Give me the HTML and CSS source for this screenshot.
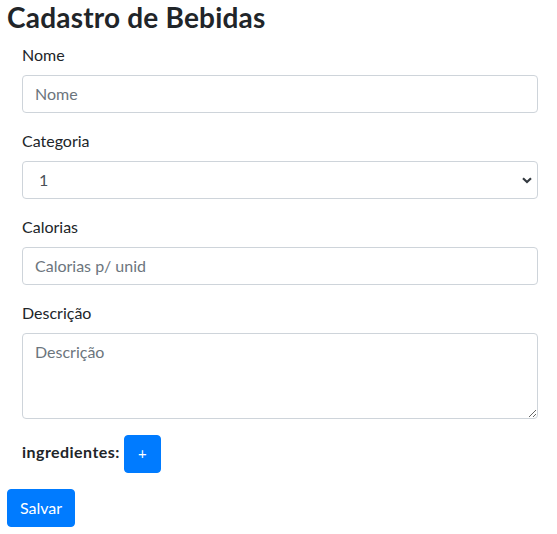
FILE: index.html
```html
<!DOCTYPE html>
<html lang="pt-BR">
<head>
<meta charset="utf-8">
<title>Cadastro de Bebidas</title>
<link rel="stylesheet" href="styles.css">
</head>
<body>
  <h3 class="title">Cadastro de Bebidas</h3>
  <form class="form">
    <div class="fields">
      <div class="form-group">
        <label class="label" for="nome">Nome</label>
        <input class="form-control" id="nome" type="text" placeholder="Nome">
      </div>
      <div class="form-group">
        <label class="label" for="categoria">Categoria</label>
        <div class="select-wrap">
          <select class="form-control select" id="categoria">
            <option>1</option>
          </select>
          <svg class="chevron" width="10" height="7" viewBox="0 0 10 7"><polyline points="1,1.2 5,5 9,1.2" fill="none" stroke="#343a40" stroke-width="2.2"/></svg>
        </div>
      </div>
      <div class="form-group">
        <label class="label" for="calorias">Calorias</label>
        <input class="form-control" id="calorias" type="text" placeholder="Calorias p/ unid">
      </div>
      <div class="form-group">
        <label class="label" for="descricao">Descrição</label>
        <textarea class="form-control textarea" id="descricao" rows="3" placeholder="Descrição"></textarea>
      </div>
      <div class="form-group ingredients">
        <label class="label-bold">ingredientes:</label>
        <button type="button" class="btn btn-add">+</button>
      </div>
    </div>
    <button type="submit" class="btn btn-save">Salvar</button>
  </form>
</body>
</html>
```

FILE: styles.css
```css
* { box-sizing: border-box; }

body {
  margin: 0;
  padding: 1px 7px 0 7px;
  font-family: "Segoe UI", Lato, "Liberation Sans", sans-serif;
  font-size: 16px;
  line-height: 1.5;
  color: #212529;
  background: #fff;
}

.title {
  margin: 0 0 8px 0;
  font-size: 28px;
  font-weight: 700;
  letter-spacing: 0.2px;
  line-height: 1.2;
  color: #212529;
}

.fields {
  padding: 0 12px 0 15px;
}

.form-group {
  margin-bottom: 16px;
}

.label {
  display: block;
  margin-bottom: 8px;
}

.form-control {
  display: block;
  width: 100%;
  height: 38px;
  padding: 6px 12px;
  font-family: inherit;
  font-size: 16px;
  line-height: 1.5;
  color: #495057;
  background: #fff;
  border: 1px solid #ced4da;
  border-radius: 4px;
  outline: none;
}

.form-control::placeholder {
  color: #6c757d;
  opacity: 1;
}

.select-wrap {
  position: relative;
}

.select {
  appearance: none;
  -webkit-appearance: none;
  padding-left: 16px;
  color: #495057;
}

.chevron {
  position: absolute;
  right: 6px;
  top: 16px;
  pointer-events: none;
}

.textarea {
  height: 86px;
  resize: vertical;
}

.ingredients {
  display: flex;
  align-items: flex-start;
}

.label-bold {
  font-weight: 700;
  letter-spacing: 0.45px;
  margin-top: 5px;
  margin-right: 4px;
}

.btn {
  display: inline-block;
  font-family: inherit;
  font-size: 16px;
  line-height: 1.5;
  font-weight: 400;
  color: #fff;
  background: #007bff;
  border: 1px solid #007bff;
  border-radius: 4px;
  padding: 6px 12px;
  height: 38px;
  cursor: pointer;
}

.btn-add {
  width: 37px;
  padding: 6px 0;
  font-size: 15px;
}

.btn-save {
  width: 68px;
  padding: 6px 0;
}
```
